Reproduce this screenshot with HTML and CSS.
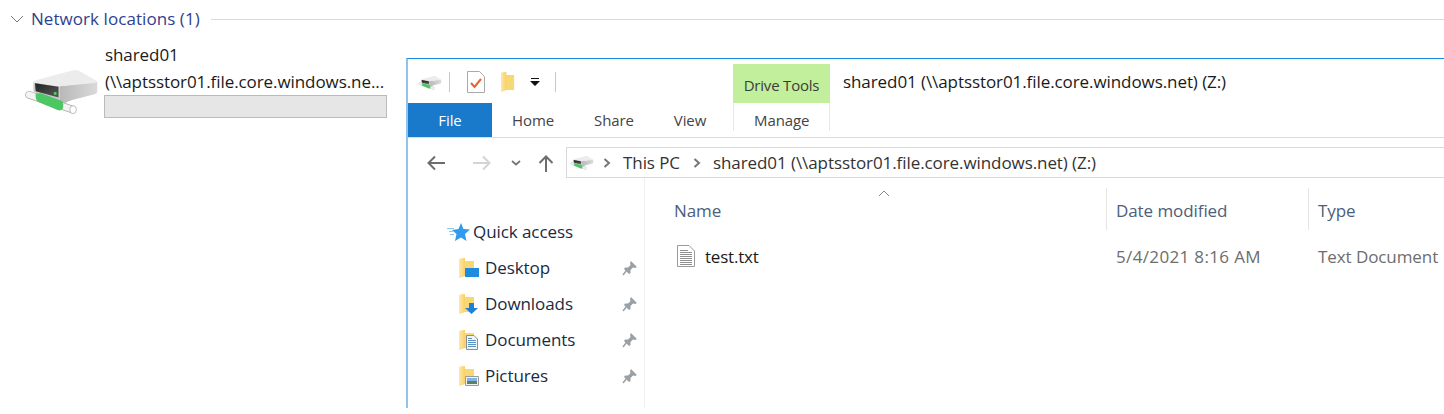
FILE: index.html
```html
<!DOCTYPE html>
<html lang="en">
<head>
  <meta charset="UTF-8" />
  <title>shared01 (Z:)</title>
  <link rel="stylesheet" href="styles.css">
</head>
<body>
  <svg class="defs" width="0" height="0">
    <defs>
      <linearGradient id="slot" x1="0" y1="0" x2="1" y2="1">
        <stop offset="0" stop-color="#222"/>
        <stop offset="1" stop-color="#5a5a5a"/>
      </linearGradient>
      <linearGradient id="side" x1="0" y1="0" x2="1" y2="0">
        <stop offset="0" stop-color="#b8b8b8"/>
        <stop offset="1" stop-color="#dadada"/>
      </linearGradient>
      <linearGradient id="fold" x1="0" y1="0" x2="1" y2="0">
        <stop offset="0" stop-color="#fde9a8"/>
        <stop offset="1" stop-color="#f7d06a"/>
      </linearGradient>
      <symbol id="drive" viewBox="25 20 230 145">
        <path d="M135 130 190 104" stroke="#c4c4c4" stroke-width="12" fill="none"/>
        <path d="M135 78 248 64V95Q248 100 240 102L140 128Q135 128 135 122Z" fill="url(#side)"/>
        <path d="M55 66 135 78V122L62 98Q56 96 55 90Z" fill="#c9c9c9"/>
        <path d="M55 66Q55 62 62 60L175 30Q182 28 190 30L243 60Q250 64 240 68L135 78Q130 79 125 78Z" fill="#ececec"/>
        <path d="M60 69 131 80V112L62 93Z" fill="url(#slot)"/>
        <circle cx="121" cy="100" r="4.500" fill="#3fdc5a"/>
        <path d="M42 104 172 148" stroke="#a8a8a8" stroke-width="23" stroke-linecap="round" fill="none"/>
        <path d="M42 104 172 148" stroke="#f4f4f4" stroke-width="19" stroke-linecap="round" fill="none"/>
        <path d="M62 100 78 99 140 122Q149 130 143 148 138 153 128 150L70 126Q60 118 62 100Z" fill="#4cc763"/>
        <ellipse cx="175" cy="149" rx="10" ry="12" fill="#fff" stroke="#a0a0a0" stroke-width="2"/>
      </symbol>
      <symbol id="folder" viewBox="0 0 16 20" preserveAspectRatio="none">
        <path d="M0 1 6 0V3H15V18H5L0 20Z" fill="#f8d775"/>
        <path d="M0 1 6 0V18L0 20Z" fill="url(#fold)"/>
      </symbol>
      <symbol id="pin" viewBox="0 0 16 16">
        <path d="M9 1 15 7 13 8 11 7.500 8.500 10 8.500 13 7 14 2 9 3 7.500 6 7.500 8.500 5 8 3Z" fill="#9aa1a6"/>
        <path d="M4.500 10.500 1 15" stroke="#9aa1a6" stroke-width="1.500" fill="none"/>
      </symbol>
    </defs>
  </svg>

  <header class="group-head">
    <svg class="group-chevron" width="14" height="8" viewBox="0 0 14 8"><path d="M1 1 7 7 13 1" fill="none" stroke="#7a7a7a"/></svg>
    <span class="group-title">Network locations (1)</span>
    <span class="group-rule"></span>
  </header>

  <div class="tile">
    <svg class="tile-icon" width="77" height="48"><use href="#drive"/></svg>
    <div class="tile-text">
      <div class="tile-name">shared01</div>
      <div>(\\aptsstor01.file.core.windows.ne...</div>
      <div class="usage-bar"></div>
    </div>
  </div>

  <section class="window">
    <div class="titlebar">
      <div class="qat">
        <svg width="24" height="15"><use href="#drive"/></svg>
        <span class="qat-sep"></span>
        <svg class="qat-props" width="18" height="22" viewBox="0 0 18 22">
          <path d="M.5.500H12.500L17.500 5.500V21.500H.5Z" fill="#fff" stroke="#a9a9a9"/>
          <path d="M4 12 7.500 16 14 8" fill="none" stroke="#e8622c" stroke-width="2"/>
        </svg>
        <svg class="qat-folder" width="14" height="20"><use href="#folder"/></svg>
        <svg class="qat-more" width="10" height="8" viewBox="0 0 10 8"><path d="M1 0h8v1H1zM0 3h10L5 8z" fill="#111"/></svg>
        <span class="qat-sep qat-sep-end"></span>
      </div>
      <div class="context-tab">Drive Tools</div>
      <div class="window-title">shared01 (\\aptsstor01.file.core.windows.net) (Z:)</div>
    </div>

    <nav class="ribbon">
      <a class="tab-file">File</a>
      <a class="tab">Home</a>
      <a class="tab">Share</a>
      <a class="tab">View</a>
      <a class="tab-manage">Manage</a>
    </nav>

    <div class="addressrow">
      <svg class="nav-back" width="20" height="16" viewBox="0 0 20 16"><path d="M19 8H3M9 1.500 2.500 8 9 14.500" fill="none" stroke="#6d6d6d" stroke-width="2"/></svg>
      <svg class="nav-forward" width="20" height="16" viewBox="0 0 20 16"><path d="M1 8H17M11 1.500 17.500 8 11 14.500" fill="none" stroke="#d4d4d4" stroke-width="2"/></svg>
      <svg class="nav-down" width="10" height="6" viewBox="0 0 10 6"><path d="M1 1 5 4.500 9 1" fill="none" stroke="#777" stroke-width="1.800"/></svg>
      <svg class="nav-up" width="16" height="18" viewBox="0 0 16 18"><path d="M8 18V3M1.500 9 8 2.500 14.500 9" fill="none" stroke="#6d6d6d" stroke-width="2"/></svg>
      <div class="addressbar">
        <svg class="crumb-drive" width="24" height="15"><use href="#drive"/></svg>
        <svg width="8" height="10" viewBox="0 0 8 10"><path d="M1.500 1 6 5 1.500 9" fill="none" stroke="#777" stroke-width="2"/></svg>
        <span class="crumb-pc">This PC</span>
        <svg width="8" height="10" viewBox="0 0 8 10"><path d="M1.500 1 6 5 1.500 9" fill="none" stroke="#777" stroke-width="2"/></svg>
        <span>shared01 (\\aptsstor01.file.core.windows.net) (Z:)</span>
      </div>
    </div>

    <div class="browser">
      <aside class="sidebar">
        <div class="quick-access">
          <svg width="24" height="18" viewBox="0 0 24 18"><path d="M15 0 17.500 6 24 6.500 19 11 20.500 18 15 14.500 9 18 10.500 11 6 7 12.500 6Z" fill="#2f9bee"/><path d="M1 5.500H8M3 8.500H7M4 11.500H8" stroke="#8ec6f2"/></svg>
          <span>Quick access</span>
        </div>
        <div class="side-item">
          <svg class="side-icon" width="20" height="21" viewBox="0 0 20 21"><use href="#folder" width="16" height="20"/><path d="M6 10H20V19H6Z" fill="#1b8ce0"/></svg>
          <span>Desktop</span>
          <svg class="pin" width="16" height="16"><use href="#pin"/></svg>
        </div>
        <div class="side-item">
          <svg class="side-icon" width="20" height="21" viewBox="0 0 20 21"><use href="#folder" width="16" height="20"/><path d="M10 9H15V14H19L12.500 20 6 14H10Z" fill="#1f7fd6"/></svg>
          <span>Downloads</span>
          <svg class="pin" width="16" height="16"><use href="#pin"/></svg>
        </div>
        <div class="side-item">
          <svg class="side-icon" width="20" height="21" viewBox="0 0 20 21"><use href="#folder" width="16" height="20"/><path d="M7.500 5.500H15L18.500 9V19.500H7.500Z" fill="#f3f3f3" stroke="#8d8d8d"/><path d="M9 8.500h4M9 10.500h8M9 12.500h8M9 14.500h8M9 16.500h8" stroke="#5c93c7"/></svg>
          <span>Documents</span>
          <svg class="pin" width="16" height="16"><use href="#pin"/></svg>
        </div>
        <div class="side-item">
          <svg class="side-icon" width="20" height="21" viewBox="0 0 20 21"><use href="#folder" width="16" height="20"/><path d="M6.500 10.500H19.500V19.500H6.500Z" fill="#f2f2f2" stroke="#9a9a9a"/><path d="M8 12H18V15H8Z" fill="#7fb5e6"/><path d="M8 15H18V18H8Z" fill="#5f7f62"/></svg>
          <span>Pictures</span>
          <svg class="pin" width="16" height="16"><use href="#pin"/></svg>
        </div>
      </aside>

      <main class="files">
        <svg class="sort-caret" width="12" height="7" viewBox="0 0 12 7"><path d="M1 6 6 1 11 6" fill="none" stroke="#8a8a8a"/></svg>
        <div class="file-head">
          <span class="col-name">Name</span>
          <span class="col-date">Date modified</span>
          <span class="col-type">Type</span>
        </div>
        <div class="file-row">
          <span class="col-name file-name">
            <svg width="18" height="22" viewBox="0 0 18 22"><path d="M.5.500H12L17.500 6V21.500H.5Z" fill="#fff" stroke="#9a9a9a"/><path d="M3 5.500h8M3 7.500h12M3 9.500h12M3 11.500h12M3 13.500h12M3 15.500h12M3 17.500h12M3 19.500h12" stroke="#8f8f8f"/></svg>
            <span>test.txt</span>
          </span>
          <span class="col-date">5/4/2021 8:16 AM</span>
          <span class="col-type">Text Document</span>
        </div>
      </main>
    </div>
  </section>
</body>
</html>
```

FILE: styles.css
```css
* {
  box-sizing: border-box;
  margin: 0;
  padding: 0;
}
html, body {
  height: 100%;
}
body {
  position: relative;
  overflow: hidden;
  background: #fff;
  font-family: 'Open Sans', 'Noto Sans', sans-serif;
  font-size: 17px;
  letter-spacing: -0.08px;
  color: #1a1a1a;
  padding: 8px 0 0 10px;
}
svg {
  display: block;
  flex: none;
}
.defs {
  position: absolute;
}
.group-head {
  display: flex;
  align-items: center;
  height: 22px;
}
.group-chevron {
  margin-right: 7px;
}
.group-title {
  margin-top: -2px;
  letter-spacing: 0.06px;
  color: #2f3f8f;
}
.group-rule {
  flex: 1;
  height: 1px;
  margin-left: 11px;
  background: #d9d9d9;
}
.tile {
  display: flex;
  margin: 13px 0 0 13px;
  width: 364px;
}
.tile-icon {
  margin: 24px 5px 0 0;
}
.tile-text {
  flex: 1;
  line-height: 26px;
  white-space: nowrap;
}
.tile-name {
  margin: -1px 0 1px;
}
.usage-bar {
  height: 23px;
  margin-left: -1px;
  background: #e6e6e6;
  border: 1px solid #bcbcbc;
}
.window {
  position: absolute;
  left: 406px;
  top: 58px;
  right: 0;
  height: 350px;
  background: #fff;
  border-top: 1px solid #1a8ae0;
  border-left: 2px solid #90c4ec;
}
.titlebar {
  display: flex;
  height: 44px;
}
.qat {
  display: flex;
  align-items: center;
  width: 325px;
  padding-left: 10px;
  margin-top: 2px;
}
.qat-sep {
  width: 1px;
  height: 20px;
  margin-left: 7px;
  background: #c9c9c9;
}
.qat-props {
  margin-left: 17px;
}
.qat-folder {
  margin-left: 16px;
}
.qat-more {
  margin-left: 15px;
}
.qat-sep-end {
  margin-left: 15px;
}
.context-tab {
  width: 97px;
  height: 39px;
  margin-top: 5px;
  background: #c1ef9b;
  color: #3c3c3c;
  font-size: 15px;
  letter-spacing: -0.2px;
  text-align: center;
  line-height: 42px;
}
.window-title {
  margin: 11px 0 0 13px;
}
.ribbon {
  display: flex;
  height: 35px;
  border-bottom: 1px solid #dadbdc;
  font-size: 15px;
  letter-spacing: -0.1px;
  line-height: 34px;
  color: #444;
}
.tab-file {
  width: 84px;
  background: #1979ca;
  color: #fff;
  text-align: center;
}
.tab {
  padding: 0 20px;
}
.tab-manage {
  width: 97px;
  height: 28px;
  margin-left: 7px;
  text-align: center;
  border: solid #e8e8e8;
  border-width: 0 1px;
}
.addressrow {
  display: flex;
  align-items: center;
  height: 40px;
  padding: 9px 0 0 18px;
}
.nav-forward {
  margin-left: 26px;
}
.nav-down {
  margin-left: 19px;
}
.nav-up {
  margin: 0 12px 0 17px;
}
.addressbar {
  flex: 1;
  display: flex;
  align-items: center;
  gap: 12px;
  height: 31px;
  padding-left: 3px;
  border: 1px solid #d9d9d9;
  border-right: none;
  color: #333;
}
.crumb-drive {
  margin-right: -3px;
}
.crumb-pc {
  padding-right: 1px;
}
.browser {
  display: flex;
  height: 230px;
}
.sidebar {
  width: 237px;
  padding: 36px 0 0 39px;
  border-right: 1px solid #f0f0f0;
}
.quick-access {
  display: flex;
  align-items: center;
  gap: 3px;
  height: 36px;
  margin-left: -1px;
  color: #1a2a44;
}
.quick-access span,
.side-item span {
  margin-top: -2px;
}
.side-item {
  display: flex;
  align-items: center;
  height: 36px;
  margin-left: 12px;
  color: #1a2a44;
}
.side-icon {
  margin-right: 6px;
}
.side-item span {
  flex: 1;
}
.pin {
  margin-right: 6px;
}
.files {
  position: relative;
  flex: 1;
  padding: 10px 0 0 29px;
}
.sort-caret {
  position: absolute;
  left: 233px;
  top: 12px;
}
.file-head,
.file-row {
  display: flex;
  white-space: nowrap;
}
.file-head {
  height: 42px;
  color: #4c607a;
}
.file-row {
  height: 46px;
  margin-top: 3px;
  color: #6d6d6d;
}
.col-name,
.col-date,
.col-type {
  display: flex;
  align-items: center;
}
.file-head span {
  padding-top: 2px;
}
.col-name {
  width: 432px;
}
.col-date {
  width: 202px;
  padding-left: 9px;
}
.col-type {
  padding-left: 9px;
}
.file-head .col-date,
.file-head .col-type {
  border-left: 1px solid #e5e5e5;
}
.file-row .col-date,
.file-row .col-type {
  border-left: 1px solid transparent;
}
.file-row .col-date {
  letter-spacing: 0.35px;
}
.file-name {
  gap: 10px;
  padding-left: 3px;
  letter-spacing: -0.2px;
  color: #1a1a1a;
}
```
